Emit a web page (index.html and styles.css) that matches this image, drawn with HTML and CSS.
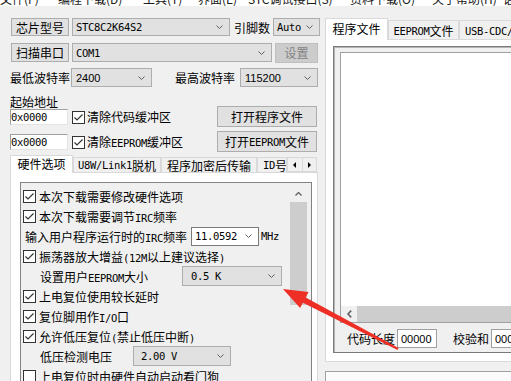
FILE: index.html
```html
<!DOCTYPE html>
<html lang="zh-CN">
<head>
<meta charset="utf-8">
<title>STC-ISP</title>
<link rel="stylesheet" href="styles.css">
</head>
<body>
<div class="menubar">
  <span class="mi mi1">文件(F)</span>
  <span class="mi mi2">编程下载(D)</span>
  <span class="mi mi3">工具(T)</span>
  <span class="mi mi4">界面(E)</span>
  <span class="mi mi5">STC调试接口(S)</span>
  <span class="mi mi6">资料下载(O)</span>
  <span class="mi mi7">关于帮助(H)</span>
  <span class="mi mi8">语言</span>
</div>
<div class="main">
  <div class="left">
    <div class="row r1">
      <div class="btn b-chip">芯片型号</div>
      <div class="combo c-chip"><span class="m">STC8C2K64S2</span><svg class="chev" width="7" height="4" viewBox="0 0 7 4"><path d="M0.5 0.5L3.5 3.5L6.5 0.5" fill="none" stroke="#606060"/></svg></div>
      <span class="lbl l-pin">引脚数</span>
      <div class="combo c-pin"><span class="m">Auto</span><svg class="chev" width="7" height="4" viewBox="0 0 7 4"><path d="M0.5 0.5L3.5 3.5L6.5 0.5" fill="none" stroke="#606060"/></svg></div>
    </div>
    <div class="row r2">
      <div class="btn b-chip">扫描串口</div>
      <div class="combo c-com"><span class="m">COM1</span><svg class="chev" width="7" height="4" viewBox="0 0 7 4"><path d="M0.5 0.5L3.5 3.5L6.5 0.5" fill="none" stroke="#606060"/></svg></div>
      <div class="btn dis b-set">设置</div>
    </div>
    <div class="row r3">
      <span class="lbl l-baud">最低波特率</span>
      <div class="combo c-lo"><span class="n">2400</span><svg class="chev" width="7" height="4" viewBox="0 0 7 4"><path d="M0.5 0.5L3.5 3.5L6.5 0.5" fill="none" stroke="#606060"/></svg></div>
      <span class="lbl l-baud l-hi">最高波特率</span>
      <div class="combo c-hi"><span class="n">115200</span><svg class="chev" width="7" height="4" viewBox="0 0 7 4"><path d="M0.5 0.5L3.5 3.5L6.5 0.5" fill="none" stroke="#606060"/></svg></div>
    </div>
    <div class="r4">起始地址</div>
    <div class="row r5">
      <div class="edit-box addr"><span class="m">0x0000</span></div>
      <svg class="cb" width="13" height="13" viewBox="0 0 13 13"><rect x="0.5" y="0.5" width="12" height="12" fill="#fff" stroke="#333"/><path d="M2.5 6.5L5 9L10.5 3.5" fill="none" stroke="#333" stroke-width="1.2"/></svg>
      <span class="cbl">清除代码缓冲区</span>
      <div class="btn b-open">打开程序文件</div>
    </div>
    <div class="row r6">
      <div class="edit-box addr"><span class="m">0x0000</span></div>
      <svg class="cb" width="13" height="13" viewBox="0 0 13 13"><rect x="0.5" y="0.5" width="12" height="12" fill="#fff" stroke="#333"/><path d="M2.5 6.5L5 9L10.5 3.5" fill="none" stroke="#333" stroke-width="1.2"/></svg>
      <span class="cbl">清除<span class="m">EEPROM</span>缓冲区</span>
      <div class="btn b-open">打开<span class="m">EEPROM</span>文件</div>
    </div>
    <div class="tabs ltabs">
      <div class="tab active t-hw">硬件选项</div>
      <div class="tab t-u8w"><span class="m">U8W/Link1</span>脱机</div>
      <div class="tab t-enc">程序加密后传输</div>
      <div class="tab t-id"><span class="m">ID</span>号</div>
      <div class="spin">
        <div class="spin-btn"><span class="tri-l"></span></div>
        <div class="spin-btn"><span class="tri-r"></span></div>
      </div>
    </div>
    <div class="tpage lpage">
      <div class="scrollbox">
        <div class="opts">
          <div class="opt">
            <svg class="cb" width="13" height="13" viewBox="0 0 13 13"><rect x="0.5" y="0.5" width="12" height="12" fill="#fff" stroke="#333"/><path d="M2.5 6.5L5 9L10.5 3.5" fill="none" stroke="#333" stroke-width="1.2"/></svg>
            <span class="ot">本次下载需要修改硬件选项</span>
          </div>
          <div class="opt">
            <svg class="cb" width="13" height="13" viewBox="0 0 13 13"><rect x="0.5" y="0.5" width="12" height="12" fill="#fff" stroke="#333"/><path d="M2.5 6.5L5 9L10.5 3.5" fill="none" stroke="#333" stroke-width="1.2"/></svg>
            <span class="ot">本次下载需要调节<span class="m">IRC</span>频率</span>
          </div>
          <div class="opt">
            <span class="ol ol-irc">输入用户程序运行时的<span class="m">IRC</span>频率</span>
            <div class="combo edit c-irc"><span class="m">11.0592</span><svg class="chev" width="7" height="4" viewBox="0 0 7 4"><path d="M0.5 0.5L3.5 3.5L6.5 0.5" fill="none" stroke="#606060"/></svg></div>
            <span class="m mhz">MHz</span>
          </div>
          <div class="opt">
            <svg class="cb" width="13" height="13" viewBox="0 0 13 13"><rect x="0.5" y="0.5" width="12" height="12" fill="#fff" stroke="#333"/><path d="M2.5 6.5L5 9L10.5 3.5" fill="none" stroke="#333" stroke-width="1.2"/></svg>
            <span class="ot">振荡器放大增益<span class="m">(12M</span>以上建议选择<span class="m">)</span></span>
          </div>
          <div class="opt">
            <span class="ol ol-ee">设置用户<span class="m">EEPROM</span>大小</span>
            <div class="combo c-ee"><span class="m">0.5 K</span><svg class="chev" width="7" height="4" viewBox="0 0 7 4"><path d="M0.5 0.5L3.5 3.5L6.5 0.5" fill="none" stroke="#606060"/></svg></div>
          </div>
          <div class="opt">
            <svg class="cb" width="13" height="13" viewBox="0 0 13 13"><rect x="0.5" y="0.5" width="12" height="12" fill="#fff" stroke="#333"/><path d="M2.5 6.5L5 9L10.5 3.5" fill="none" stroke="#333" stroke-width="1.2"/></svg>
            <span class="ot">上电复位使用较长延时</span>
          </div>
          <div class="opt">
            <svg class="cb" width="13" height="13" viewBox="0 0 13 13"><rect x="0.5" y="0.5" width="12" height="12" fill="#fff" stroke="#333"/><path d="M2.5 6.5L5 9L10.5 3.5" fill="none" stroke="#333" stroke-width="1.2"/></svg>
            <span class="ot">复位脚用作<span class="m">I/O</span>口</span>
          </div>
          <div class="opt">
            <svg class="cb" width="13" height="13" viewBox="0 0 13 13"><rect x="0.5" y="0.5" width="12" height="12" fill="#fff" stroke="#333"/><path d="M2.5 6.5L5 9L10.5 3.5" fill="none" stroke="#333" stroke-width="1.2"/></svg>
            <span class="ot">允许低压复位<span class="m">(</span>禁止低压中断<span class="m">)</span></span>
          </div>
          <div class="opt">
            <span class="ol ol-lv">低压检测电压</span>
            <div class="combo c-lv"><span class="m">2.00 V</span><svg class="chev" width="7" height="4" viewBox="0 0 7 4"><path d="M0.5 0.5L3.5 3.5L6.5 0.5" fill="none" stroke="#606060"/></svg></div>
          </div>
          <div class="opt">
            <svg class="cb" width="13" height="13" viewBox="0 0 13 13"><rect x="0.5" y="0.5" width="12" height="12" fill="#fff" stroke="#333"/></svg>
            <span class="ot">上电复位时由硬件自动启动看门狗</span>
          </div>
        </div>
        <div class="vscroll">
          <div class="vs-up"><svg width="7" height="4" viewBox="0 0 7 4"><path d="M0.5 3.5L3.5 0.5L6.5 3.5" fill="none" stroke="#606060" stroke-width="1.3"/></svg></div>
          <div class="vs-thumb"></div>
        </div>
      </div>
    </div>
  </div>
  <div class="right">
    <div class="tabs rtabs">
      <div class="tab active t-prog">程序文件</div>
      <div class="tab t-eep"><span class="m">EEPROM</span>文件</div>
      <div class="tab t-usb"><span class="m">USB-CDC/CDC2</span></div>
    </div>
    <div class="tpage rpage">
      <div class="group">
        <div class="hexbox">
          <div class="hexview"></div>
          <div class="hscroll">
            <div class="hs-left"><svg width="5" height="8" viewBox="0 0 5 8"><path d="M4.2 0.6L1 4L4.2 7.4" fill="none" stroke="#606060" stroke-width="1.6"/></svg></div>
            <div class="hs-thumb"></div>
          </div>
        </div>
        <div class="row coderow">
          <span class="lbl l-len">代码长度</span>
          <div class="edit-box sum"><span class="n">00000</span></div>
          <span class="lbl l-sum">校验和</span>
          <div class="edit-box sum"><span class="n">00000</span></div>
        </div>
      </div>
    </div>
    <div class="lowbox"></div>
  </div>
</div>
<svg class="arrow" width="511" height="381" viewBox="0 0 511 381">
  <polygon points="283,289 308.5,292 305.7,297.4 398.5,348.1 397.5,349.9 302.9,302.8 300.1,308.1" fill="#ee2f25"/>
</svg>
</body>
</html>
```

FILE: styles.css
```css
html, body {
  margin: 0;
  padding: 0;
  width: 511px;
  height: 381px;
  overflow: hidden;
}
body {
  position: relative;
  background: #f0f0f0;
  font-family: "Noto Sans CJK SC", "Noto Sans", sans-serif;
  font-size: 12px;
  color: #000;
}

/* menu bar (cut off at top) */
.menubar {
  height: 6px;
  background: #fff;
  overflow: hidden;
  display: flex;
  align-items: flex-end;
  white-space: nowrap;
}
.mi {
  flex: none;
  box-sizing: border-box;
  height: 13px;
  line-height: 12px;
  padding-bottom: 1px;
  color: #1a1a1a;
}
.mi1 { width: 58px; }
.mi2 { width: 85px; }
.mi3 { width: 55px; }
.mi4 { width: 50px; }
.mi5 { width: 102px; }
.mi6 { width: 82px; }
.mi7 { width: 71px; }
.mi8 { width: 40px; }

.main {
  display: flex;
  align-items: flex-start;
}

/* generic controls */
.row { display: flex; align-items: center; }
.lbl { flex: none; white-space: nowrap; }
.m {
  font-family: "DejaVu Sans Mono", "Liberation Mono", monospace;
  font-size: 10.5px;
  letter-spacing: -0.33px;
}
.n {
  font-family: "Liberation Sans", Arial, sans-serif;
  font-size: 11px;
}
.btn {
  flex: none;
  box-sizing: border-box;
  display: flex;
  align-items: center;
  justify-content: center;
  background: #e1e1e1;
  border: 1px solid #adadad;
  white-space: nowrap;
}
.btn.dis {
  background: #cccccc;
  border-color: #bfbfbf;
  color: #838383;
}
.combo {
  flex: none;
  box-sizing: border-box;
  display: flex;
  align-items: center;
  background: #e1e1e1;
  border: 1px solid #adadad;
  padding: 0 6px 0 3px;
  white-space: nowrap;
}
.combo .chev { margin-left: auto; flex: none; }
.combo.edit { background: #fff; border-color: #7a7a7a; }
.edit-box {
  flex: none;
  box-sizing: border-box;
  display: flex;
  align-items: center;
  background: #fff;
  border: 1px solid #a0a0a0;
}
.cb { flex: none; display: block; }

/* left column */
.left {
  flex: none;
  width: 325px;
  box-sizing: border-box;
  padding: 12px 0 0 10px;
}
.r1 { height: 18px; }
.b-chip { margin-left: 1px; width: 58px; height: 100%; }
.c-chip { margin-left: 3px; width: 158px; height: 18px; }
.l-pin { margin-left: 4px; width: 36px; }
.c-pin { margin-left: 3px; width: 47px; height: 18px; }

.r2 { margin-top: 7px; height: 19px; }
.c-com { margin-left: 3px; width: 200px; height: 19px; }
.b-set { margin-left: 3px; width: 43px; height: 20px; }

.r3 { margin-top: 6px; height: 19px; }
.l-baud { width: 60px; }
.c-lo { margin-left: 1px; width: 81px; height: 19px; padding-left: 4px; }
.l-hi { margin-left: 23px; }
.c-hi { margin-left: 5px; width: 78px; height: 19px; padding-left: 4px; }

.r4 {
  margin-top: 9px;
  height: 10px;
  line-height: 12px;
}

.r5 { height: 21px; }
.r6 { margin-top: 4px; height: 21px; }
.addr {
  width: 58px;
  height: 16px;
  border-right-color: #e3e3e3;
  border-bottom-color: #e3e3e3;
}
.r5 .cb, .r6 .cb { margin-left: 4px; margin-top: 2px; }
.cbl { margin-left: 2px; white-space: nowrap; }
.b-open { margin-left: auto; margin-right: 8px; width: 100px; height: 21px; }

/* tabs */
.tabs {
  display: flex;
  align-items: flex-end;
}
.tab {
  flex: none;
  box-sizing: border-box;
  display: flex;
  align-items: center;
  justify-content: center;
  background: #f0f0f0;
  border: 1px solid #d9d9d9;
  border-bottom: none;
  white-space: nowrap;
  overflow: hidden;
}
.tab.active {
  position: relative;
  z-index: 1;
  background: #fff;
  margin-bottom: -1px;
}
.ltabs { margin-top: 3px; height: 17px; width: 308px; }
.ltabs .tab { height: 15px; }
.ltabs .tab.active { height: 18px; padding-bottom: 2px; }
.t-hw { width: 63px; }
.t-u8w { width: 88px; }
.t-enc { width: 96px; }
.t-id { width: 30px; justify-content: flex-start; padding-left: 5px; }
.spin {
  flex: none;
  display: flex;
  width: 30px;
  height: 15px;
  align-self: flex-end;
}
.spin-btn {
  flex: 1;
  box-sizing: border-box;
  display: flex;
  align-items: center;
  justify-content: center;
  background: #f0f0f0;
  border: 1px solid #d9d9d9;
}
.spin-btn + .spin-btn { border-left: none; }
.tri-l {
  width: 0; height: 0;
  border-top: 3px solid transparent;
  border-bottom: 3px solid transparent;
  border-right: 3px solid #000;
}
.tri-r {
  width: 0; height: 0;
  border-top: 3px solid transparent;
  border-bottom: 3px solid transparent;
  border-left: 3px solid #000;
}

.tpage {
  box-sizing: border-box;
  background: #fff;
  border: 1px solid #d9d9d9;
}
.lpage {
  width: 308px;
  height: 230px;
  padding: 9px 5px 0 9px;
  overflow: hidden;
}
.scrollbox {
  box-sizing: border-box;
  height: 230px;
  display: flex;
  background: #f0f0f0;
  border: 1px solid #828282;
}
.opts {
  flex: 1;
  padding: 3px 0 0 2px;
}
.opt {
  display: flex;
  align-items: center;
  height: 20px;
  white-space: nowrap;
}
.ot { margin-left: 3px; }
.ol { flex: none; box-sizing: content-box; }
.ol-irc { width: 166px; padding-left: 2px; }
.ol-ee { width: 142px; padding-left: 17px; }
.ol-lv { width: 93px; padding-left: 17px; }
.c-irc { width: 68px; height: 19px; padding-left: 3px; }
.mhz { margin-left: 2px; }
.c-ee { width: 100px; height: 20px; padding-left: 8px; }
.c-lv { width: 98px; height: 20px; padding-left: 7px; }

.vscroll {
  flex: none;
  width: 21px;
  display: flex;
  flex-direction: column;
}
.vs-up {
  height: 10px;
  padding-top: 9px;
  width: 17px;
  display: flex;
  justify-content: center;
}
.vs-up svg { display: block; }
.vs-thumb {
  width: 17px;
  height: 103px;
  background: #cdcdcd;
}

/* right column */
.right {
  flex: none;
  width: 260px;
  padding-top: 12px;
}
.rtabs { height: 21px; }
.rtabs .tab { height: 19px; padding-top: 1px; }
.rtabs .tab.active { height: 22px; padding-bottom: 3px; }
.t-prog { width: 63px; }
.t-eep { width: 71px; }
.t-usb { width: 90px; justify-content: flex-start; padding-left: 5px; }

.rpage {
  width: 260px;
  padding: 6px 0 8px 7px;
}
.group {
  box-sizing: border-box;
  border: 1px solid #7a7a7a;
  border-right: none;
  box-shadow: inset 1px 1px 0 #b4b4b4;
  padding: 5px 0 4px 6px;
  background: #f0f0f0;
}
.hexbox {
  box-sizing: border-box;
  height: 271px;
  border: 1px solid #a0a0a0;
  border-right: none;
  background: #fff;
  display: flex;
  flex-direction: column;
}
.hexview { flex: 1; }
.hscroll {
  height: 16px;
  display: flex;
  background: #f0f0f0;
}
.hs-left {
  flex: none;
  width: 16px;
  display: flex;
  align-items: center;
  justify-content: center;
}
.hs-left svg { display: block; }
.hs-thumb { flex: 1; background: #cdcdcd; }

.coderow { margin-top: 6px; height: 19px; }
.l-len { margin-left: 7px; width: 48px; }
.sum { margin-left: 2px; width: 40px; height: 19px; padding-left: 3px; }
.l-sum { margin-left: 16px; width: 36px; }

.lowbox {
  margin-top: 9px;
  height: 30px;
  box-sizing: border-box;
  border: 1px solid #a0a0a0;
  border-right: none;
  background: #fbfbfb;
}

/* annotation arrow overlay */
.arrow {
  position: absolute;
  left: 0;
  top: 0;
  pointer-events: none;
}
```
